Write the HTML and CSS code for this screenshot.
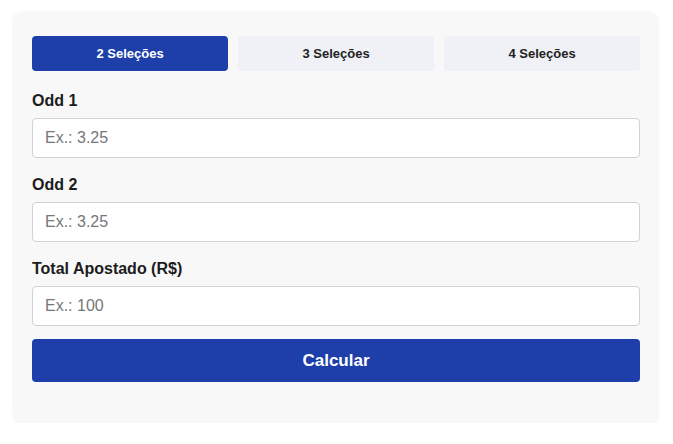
FILE: index.html
```html
<!DOCTYPE html>
<html lang="pt-BR">
<head>
    <meta charset="UTF-8">
    <meta name="viewport" content="width=device-width, initial-scale=1.0">
    <title>Calculadora de Surebet</title>
    <link rel="stylesheet" href="styles.css">
</head>
<body>
    <div class="calc-card">
        <div class="tabs">
            <button class="tab active">2 Seleções</button>
            <button class="tab">3 Seleções</button>
            <button class="tab">4 Seleções</button>
        </div>

        <div class="field">
            <label for="odd1">Odd 1</label>
            <input type="text" id="odd1" placeholder="Ex.: 3.25">
        </div>
        <div class="field">
            <label for="odd2">Odd 2</label>
            <input type="text" id="odd2" placeholder="Ex.: 3.25">
        </div>
        <div class="field">
            <label for="total">Total Apostado (R$)</label>
            <input type="text" id="total" placeholder="Ex.: 100">
        </div>

        <button class="btn-calc">Calcular</button>
    </div>
</body>
</html>
```

FILE: styles.css
```css
body {
    font-family: 'Liberation Sans', Arial, sans-serif;
    background-color: #fff;
    color: #222;
    margin: 0;
    padding: 12px 16px 0 14px;
}

.calc-card {
    background-color: #f8f8f9;
    border-radius: 8px;
    box-shadow: 0 1px 4px rgba(0, 0, 0, 0.08);
    padding: 24px 17px 41px 18px;
}

.tabs {
    display: flex;
    gap: 10px;
    margin-bottom: 21px;
}

.tab {
    flex: 1;
    height: 35px;
    border: none;
    border-radius: 4px;
    background-color: #f0f1f7;
    color: #222;
    font-family: inherit;
    font-size: 13px;
    font-weight: bold;
    cursor: pointer;
}

.tab.active {
    background-color: #1e3faa;
    color: #fff;
}

.field {
    margin-bottom: 18px;
}

.field:last-of-type {
    margin-bottom: 13px;
}

.field label {
    display: block;
    font-size: 16px;
    line-height: 18px;
    font-weight: bold;
    color: #1c1c1c;
    margin-bottom: 8px;
}

.field input {
    display: block;
    box-sizing: border-box;
    width: 100%;
    height: 40px;
    padding: 0 12px;
    border: 1px solid #d2d2d6;
    border-radius: 4px;
    background-color: #fff;
    font-family: inherit;
    font-size: 16px;
    color: #222;
}

.field input::placeholder {
    color: #777;
}

.btn-calc {
    display: block;
    width: 100%;
    height: 43px;
    border: none;
    border-radius: 4px;
    background-color: #1e3faa;
    color: #fff;
    font-family: inherit;
    font-size: 17px;
    font-weight: bold;
    cursor: pointer;
}
```
